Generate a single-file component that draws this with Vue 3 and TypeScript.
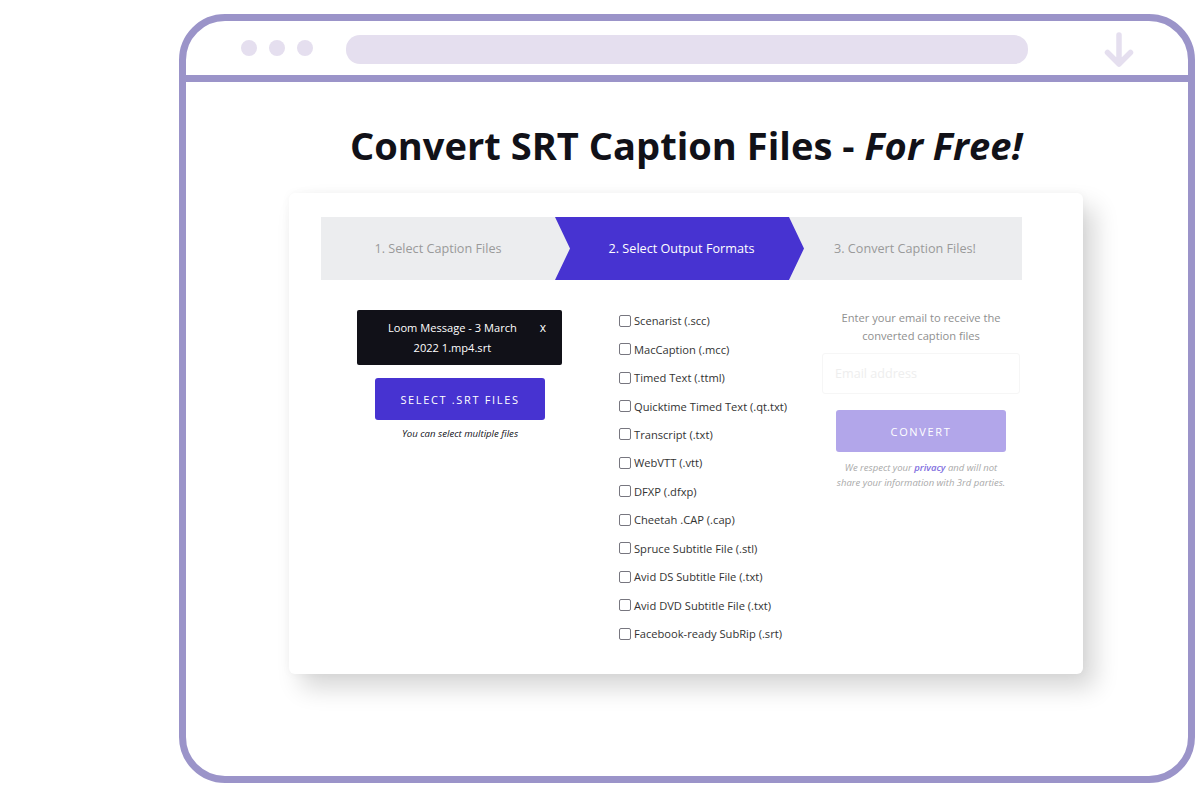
<template>
  <div class="page">
    <div class="browser">
      <header class="bar">
        <div class="dots">
          <span class="dot"></span>
          <span class="dot"></span>
          <span class="dot"></span>
        </div>
        <div class="address"></div>
        <svg class="download" width="32" height="36" viewBox="0 0 32 36" fill="none">
          <path d="M16 3V32M4.5 20.5L16 32L27.5 20.5" stroke="#e5dfef" stroke-width="5.5" stroke-linecap="round" stroke-linejoin="round" />
        </svg>
      </header>

      <main class="content">
        <h1 class="title">Convert SRT Caption Files - <em>For Free!</em></h1>

        <section class="card">
          <div class="steps">
            <div v-for="(step, i) in steps" :key="step" class="step" :class="{ active: i === 1 }">
              {{ step }}
            </div>
          </div>

          <div class="columns">
            <div class="col-files">
              <div class="file">
                <span class="file-name">Loom Message - 3 March 2022 1.mp4.srt</span>
                <span class="file-x">x</span>
              </div>
              <button class="btn btn-select">SELECT .SRT FILES</button>
              <p class="hint">You can select multiple files</p>
            </div>

            <div class="col-formats">
              <label v-for="format in formats" :key="format" class="format">
                <input type="checkbox" />
                <span>{{ format }}</span>
              </label>
            </div>

            <div class="col-email">
              <p class="email-label">Enter your email to receive the converted caption files</p>
              <input class="email" type="text" placeholder="Email address" />
              <button class="btn btn-convert">CONVERT</button>
              <p class="privacy">
                We respect your <a href="#" @click.prevent>privacy</a> and will not share your information with 3rd parties.
              </p>
            </div>
          </div>
        </section>
      </main>
    </div>
  </div>
</template>

<script setup lang="ts">
const steps: string[] = [
  '1. Select Caption Files',
  '2. Select Output Formats',
  '3. Convert Caption Files!',
]

const formats: string[] = [
  'Scenarist (.scc)',
  'MacCaption (.mcc)',
  'Timed Text (.ttml)',
  'Quicktime Timed Text (.qt.txt)',
  'Transcript (.txt)',
  'WebVTT (.vtt)',
  'DFXP (.dfxp)',
  'Cheetah .CAP (.cap)',
  'Spruce Subtitle File (.stl)',
  'Avid DS Subtitle File (.txt)',
  'Avid DVD Subtitle File (.txt)',
  'Facebook-ready SubRip (.srt)',
]
</script>

<style>
html,
body {
  margin: 0;
  background: #fff;
  overflow: hidden;
}
</style>

<style scoped>
.page {
  width: 1200px;
  height: 800px;
  padding: 14px 5px 0 179px;
  box-sizing: border-box;
  font-family: 'Open Sans', 'Liberation Sans', sans-serif;
}
.browser {
  width: 1016px;
  height: 769px;
  box-sizing: border-box;
  border: 7px solid #9b94c9;
  border-radius: 46px;
  overflow: hidden;
}
.bar {
  height: 61px;
  box-sizing: border-box;
  border-bottom: 7px solid #9b94c9;
  display: flex;
  align-items: center;
  padding: 0 0 0 55px;
}
.dots {
  display: flex;
  gap: 12px;
}
.dot {
  width: 16px;
  height: 16px;
  border-radius: 50%;
  background: #e5dfef;
}
.address {
  width: 682px;
  height: 29px;
  margin-left: 33px;
  margin-top: 2px;
  border-radius: 14px;
  background: #e5dfef;
}
.download {
  margin-left: 75px;
  margin-top: 3px;
}
.content {
  padding-left: 103px;
}
.title {
  margin: 38px 0 0;
  padding-left: 61px;
  font-size: 38.1px;
  line-height: 50px;
  font-weight: 700;
  color: #111118;
  white-space: nowrap;
}
.title em {
  font-style: italic;
}
.card {
  width: 794px;
  height: 481px;
  margin-top: 23px;
  padding: 24px 61px 0 32px;
  box-sizing: border-box;
  background: #fff;
  border-radius: 6px;
  box-shadow: 12px 14px 24px rgba(0, 0, 0, 0.16), 0 0 10px rgba(0, 0, 0, 0.04);
}
.steps {
  display: flex;
  height: 63px;
  background: #ecedef;
}
.step {
  width: 234px;
  flex: none;
  box-sizing: border-box;
  padding-bottom: 2px;
  display: flex;
  align-items: center;
  justify-content: center;
  font-size: 12.65px;
  color: #9a9a9a;
}
.step:last-child {
  padding-right: 2px;
}
.step.active {
  width: 249px;
  margin-right: -15px;
  padding-left: 4px;
  background: #4733d1;
  color: #fff;
  clip-path: polygon(0 0, 234px 0, 249px 50%, 234px 100%, 0 100%, 15px 50%);
}
.columns {
  display: flex;
  align-items: flex-start;
}
.col-files {
  width: 278px;
  flex: none;
  padding-top: 30px;
  display: flex;
  flex-direction: column;
  align-items: center;
}
.file {
  width: 205px;
  height: 55px;
  box-sizing: border-box;
  margin-right: 1px;
  padding: 8px 16px 0 22px;
  display: flex;
  gap: 14px;
  background: #111118;
  border-radius: 2px;
  color: #fff;
  font-size: 11.1px;
  line-height: 20px;
  text-align: center;
}
.file-name {
  flex: 1;
}
.file-x {
  font-size: 12px;
  line-height: 20px;
}
.btn {
  width: 170px;
  height: 42px;
  border: none;
  border-radius: 3px;
  color: #fff;
  font-family: inherit;
  font-size: 11px;
  letter-spacing: 1.65px;
  padding: 1px 0 0;
}
.btn-select {
  margin-top: 13px;
  background: #4733d1;
}
.hint {
  margin: 7px 0 0;
  font-size: 9.6px;
  line-height: 14px;
  font-style: italic;
  color: #111118;
}
.col-formats {
  width: 203px;
  flex: none;
  margin-left: 20px;
  padding-top: 26.5px;
  display: flex;
  flex-direction: column;
}
.format {
  height: 28.45px;
  display: flex;
  align-items: center;
  gap: 3px;
  font-size: 11.15px;
  color: #333;
  white-space: nowrap;
}
.format input {
  width: 12px;
  height: 12px;
  margin: 0;
  appearance: none;
  box-sizing: border-box;
  border: 1px solid #77767f;
  border-radius: 2px;
  background: #fff;
}
.col-email {
  width: 198px;
  flex: none;
  padding-top: 29px;
  display: flex;
  flex-direction: column;
  align-items: center;
}
.email-label {
  margin: 0;
  font-size: 11.15px;
  line-height: 17.5px;
  color: #8f8f8f;
  text-align: center;
}
.email {
  width: 198px;
  height: 41px;
  margin-top: 9px;
  box-sizing: border-box;
  padding: 0 12px;
  border: 1px solid #f6f6f6;
  border-radius: 3px;
  font-family: inherit;
  font-size: 12.6px;
  outline: none;
}
.email::placeholder {
  color: #eeeeee;
}
.btn-convert {
  margin-top: 16px;
  background: #b2a6ea;
}
.privacy {
  margin: 8px 0 0;
  width: 172px;
  font-size: 9.5px;
  line-height: 15px;
  font-style: italic;
  color: #a9a9a9;
  text-align: center;
}
.privacy a {
  color: #7f6fe0;
  text-decoration: none;
  font-weight: 600;
}
</style>
